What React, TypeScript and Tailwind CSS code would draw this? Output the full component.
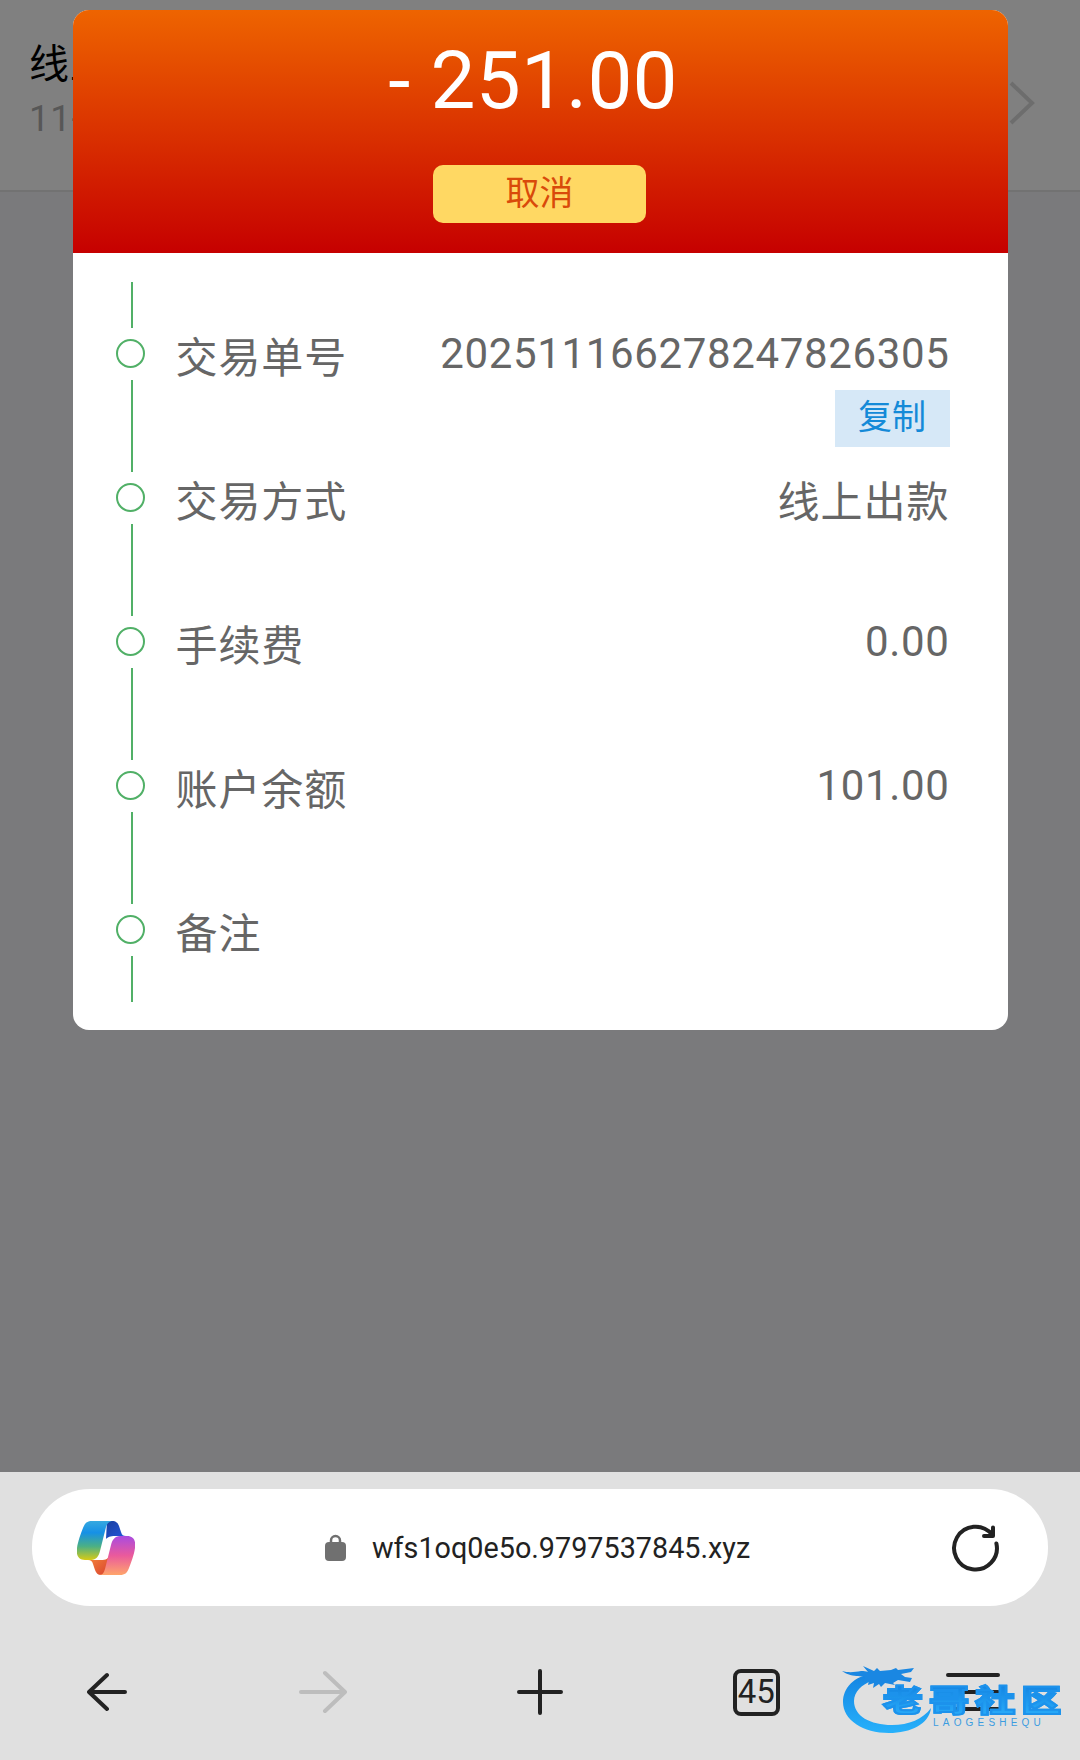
import type { ReactNode } from "react";

interface DetailRow {
  label: string;
  value?: string;
  copyable?: boolean;
  cjk?: boolean;
}

const rows: DetailRow[] = [
  { label: "交易单号", value: "202511166278247826305", copyable: true },
  { label: "交易方式", value: "线上出款", cjk: true },
  { label: "手续费", value: "0.00" },
  { label: "账户余额", value: "101.00" },
  { label: "备注" },
];

function TimelineMark() {
  return (
    <div className="flex h-36 w-[29px] flex-col items-center justify-between">
      <div className="ml-[2px] h-[46px] w-[2px] bg-[#51b067]" />
      <div className="-mt-px size-[29px] rounded-full border-2 border-[#51b067]" />
      <div className="ml-[2px] h-[46px] w-[2px] bg-[#51b067]" />
    </div>
  );
}

function Row({ label, value, copyable, cjk }: DetailRow) {
  return (
    <div className="flex h-36 pr-[58px] pl-[43.5px] text-[42px] leading-[60px] tracking-[0.65px] text-[#666]">
      <TimelineMark />
      <div className="ml-[30.5px] pt-[47px] tracking-[0.9px] whitespace-nowrap">{label}</div>
      <div className="ml-auto flex flex-col items-end pt-[42px]">
        {value && <div className={cjk ? "pt-[5px] tracking-[1px] whitespace-nowrap" : "whitespace-nowrap"}>{value}</div>}
        {copyable && (
          <button className="mt-[6px] h-[57px] w-[115px] bg-[#d6e8f7] pb-[2px] text-[34px] leading-[55px] tracking-normal text-[#148ad8]">
            复制
          </button>
        )}
      </div>
    </div>
  );
}

function CopilotIcon() {
  return (
    <svg width="58" height="54" viewBox="0 0 58 54">
      <defs>
        <linearGradient id="cpA" x1="0" y1="0" x2="0" y2="1">
          <stop offset="0" stopColor="#36a9e0" />
          <stop offset="0.3" stopColor="#1690e6" />
          <stop offset="0.65" stopColor="#4bb085" />
          <stop offset="1" stopColor="#d8cb14" />
        </linearGradient>
        <linearGradient id="cpB" x1="0" y1="0" x2="0" y2="1">
          <stop offset="0" stopColor="#a94be0" />
          <stop offset="0.5" stopColor="#ea5a9c" />
          <stop offset="1" stopColor="#ffa56b" />
        </linearGradient>
        <linearGradient id="cpC" x1="0" y1="0" x2="1" y2="1">
          <stop offset="0" stopColor="#1a3f9e" />
          <stop offset="1" stopColor="#2258e0" />
        </linearGradient>
        <linearGradient id="cpD" x1="0" y1="0" x2="1" y2="1">
          <stop offset="0" stopColor="#f58a3c" />
          <stop offset="1" stopColor="#d9402f" />
        </linearGradient>
      </defs>
      <path d="M30 0h5c4 0 6 2 7 5l2 6c1 3 2 4 5 4H38c-5 0-7 1-9 3z" fill="url(#cpC)" />
      <path d="M11 39c3 0 4 1 5 4l2 6c1 3 3 5 6 5h5l4-20c-2 4-4 5-9 5z" fill="url(#cpD)" />
      <path d="M15 0h21c-4 0-6 3-7 6l-6 24c-1 5-4 9-9 9H8c-7 0-9-5-8-12C1 20 4 12 6 7c2-5 4-7 9-7z" fill="url(#cpA)" />
      <path d="M43 54H22c4 0 5-3 6-6l6-24c1-5 4-9 9-9h7c7 0 9 5 8 12-1 7-4 15-6 20-2 5-4 7-9 7z" fill="url(#cpB)" />
    </svg>
  );
}

function ToolbarSlot({ children }: { children: ReactNode }) {
  return <button className="flex h-full w-[216.5px] shrink-0 items-center justify-center text-[#222]">{children}</button>;
}

function Watermark() {
  return (
    <div className="absolute top-[192px] left-[842px] h-[72px] w-[222px]">
      <svg className="absolute inset-0" width="222" height="72" viewBox="0 0 222 72">
        <defs>
          <linearGradient id="wm" x1="0" y1="0" x2="0" y2="1">
            <stop offset="0" stopColor="#1484e2" />
            <stop offset="1" stopColor="#27b1fb" />
          </linearGradient>
        </defs>
        <path d="M30 10C12 12 1 24 1 38c0 18 20 31 46 31 22 0 40-9 42-25-8 11-22 17-39 17-22 0-38-9-38-24 0-9 8-17 18-20l9-4z" fill="url(#wm)" />
        <path
          d="M0 7c7 2 13 1 19 0 3 0 5 0 7 1l-5-6 11 5 3-3 3 3 11-1 5-2 2 2 16-2-3 4-10 2 4 3 7 1-2 4-12-2-5 3 2 2-10-2-4 4-2-3-6 4 1-5-6 2 1-5-6 2 2-5-7-1C12 12 5 11 0 7z"
          fill="#1a87e2"
        />
      </svg>
      <div className="absolute top-[21px] left-[41px] flex origin-top-left scale-x-[1.32] bg-gradient-to-b from-[#1484e2] to-[#2aaefa] bg-clip-text text-[30px] leading-[32px] font-black tracking-[5px] whitespace-nowrap text-transparent [-webkit-text-stroke:2px_#1c92ec]">
        老哥社区
      </div>
      <div className="absolute top-[53px] left-[91px] font-['Liberation_Sans'] text-[10px] leading-[12px] tracking-[4.2px] text-[#3c9ce0]">
        LAOGESHEQU
      </div>
    </div>
  );
}

export default function App() {
  return (
    <div className="relative flex h-[1760px] w-[1080px] flex-col overflow-hidden bg-[#7a7a7c] font-[Roboto,'Noto_Sans_CJK_SC',sans-serif]">
      {/* dimmed record list behind the dialog */}
      <div className="flex h-[192px] items-start justify-between border-b-2 border-[#727272] bg-[#808080] pl-[29px]">
        <div className="pt-[37px]">
          <div className="text-[40px] leading-[56px] tracking-[1px] text-black">线上出款</div>
          <div className="text-[36.5px] leading-[52px] tracking-[0.8px] text-[#575757]">11-16</div>
        </div>
        <svg className="mt-[80px] mr-[44px]" width="27" height="46" viewBox="0 0 27 46" fill="none" stroke="#6d6d6d" strokeWidth="4">
          <path d="m2 3 21 20L2 43" />
        </svg>
      </div>

      {/* transaction detail dialog */}
      <div className="absolute top-[9.5px] left-[72.5px] h-[1020.5px] w-[935px] overflow-hidden rounded-[16px] bg-white">
        <div className="flex h-[243.5px] flex-col items-center bg-[linear-gradient(180deg,#ee6400,#c60000)]">
          <div className="mt-[23px] mr-[14px] text-[80px] leading-[96px] tracking-[0.2px] whitespace-nowrap text-white">- 251.00</div>
          <button className="mt-[36px] mr-px h-[58px] w-[213px] rounded-[10px] bg-[#ffd863] pb-[2px] text-[34px] leading-[56px] text-[#d94a0a]">
            取消
          </button>
        </div>
        <div className="pt-[29px]">
          {rows.map((row) => (
            <Row key={row.label} {...row} />
          ))}
        </div>
      </div>

      {/* browser chrome */}
      <div className="relative mt-auto flex h-[288px] flex-col bg-[#e0e0e0]">
        <div className="mx-8 mt-[17px] flex h-[117px] shrink-0 items-center rounded-[58px] bg-white">
          <div className="ml-[45px]">
            <CopilotIcon />
          </div>
          <svg className="ml-[190px]" width="21" height="28" viewBox="0 0 21 28">
            <rect y="8" width="21" height="19" rx="4" fill="#707070" />
            <path d="M6 10V6.500a4.500 4.500 0 0 1 9 0V10" fill="none" stroke="#707070" strokeWidth="2.5" />
          </svg>
          <div className="ml-[26px] text-[28.75px] leading-[40px] whitespace-nowrap text-[#222]">wfs1oq0e5o.9797537845.xyz</div>
          <svg className="mr-[48px] mb-[2px] ml-auto" width="50" height="50" viewBox="0 0 50 50" fill="none" stroke="#222" strokeWidth="4" strokeLinecap="round" strokeLinejoin="round">
            <path d="M46.400 21.500A21.400 21.400 0 1 1 42 12.500" />
            <path d="M43 5.500v8.500h-9" />
          </svg>
        </div>
        <div className="-ml-[1.5px] flex flex-1 items-center pt-[18px]">
          <ToolbarSlot>
            <svg width="40" height="40" viewBox="0 0 40 40" fill="none" stroke="currentColor" strokeWidth="4" strokeLinecap="round" strokeLinejoin="round">
              <path d="M38 20H2M20 3 2 20l18 17" />
            </svg>
          </ToolbarSlot>
          <ToolbarSlot>
            <svg width="48" height="44" viewBox="0 0 48 44" fill="none" stroke="#bdbdbd" strokeWidth="4" strokeLinecap="round" strokeLinejoin="round">
              <path d="M2 22h44M26 3l20 19-20 19" />
            </svg>
          </ToolbarSlot>
          <ToolbarSlot>
            <svg width="46" height="46" viewBox="0 0 46 46" fill="none" stroke="currentColor" strokeWidth="4" strokeLinecap="round">
              <path d="M23 2v42M2 23h42" />
            </svg>
          </ToolbarSlot>
          <ToolbarSlot>
            <span className="flex size-[47px] items-center justify-center rounded-[8px] border-4 border-[#222] text-[33px]">45</span>
          </ToolbarSlot>
          <ToolbarSlot>
            <svg width="54" height="40" viewBox="0 0 54 40" stroke="currentColor" strokeWidth="4" strokeLinecap="round">
              <path d="M2 3h50M2 20h50M2 37h50" />
            </svg>
          </ToolbarSlot>
        </div>
        <Watermark />
      </div>
    </div>
  );
}
